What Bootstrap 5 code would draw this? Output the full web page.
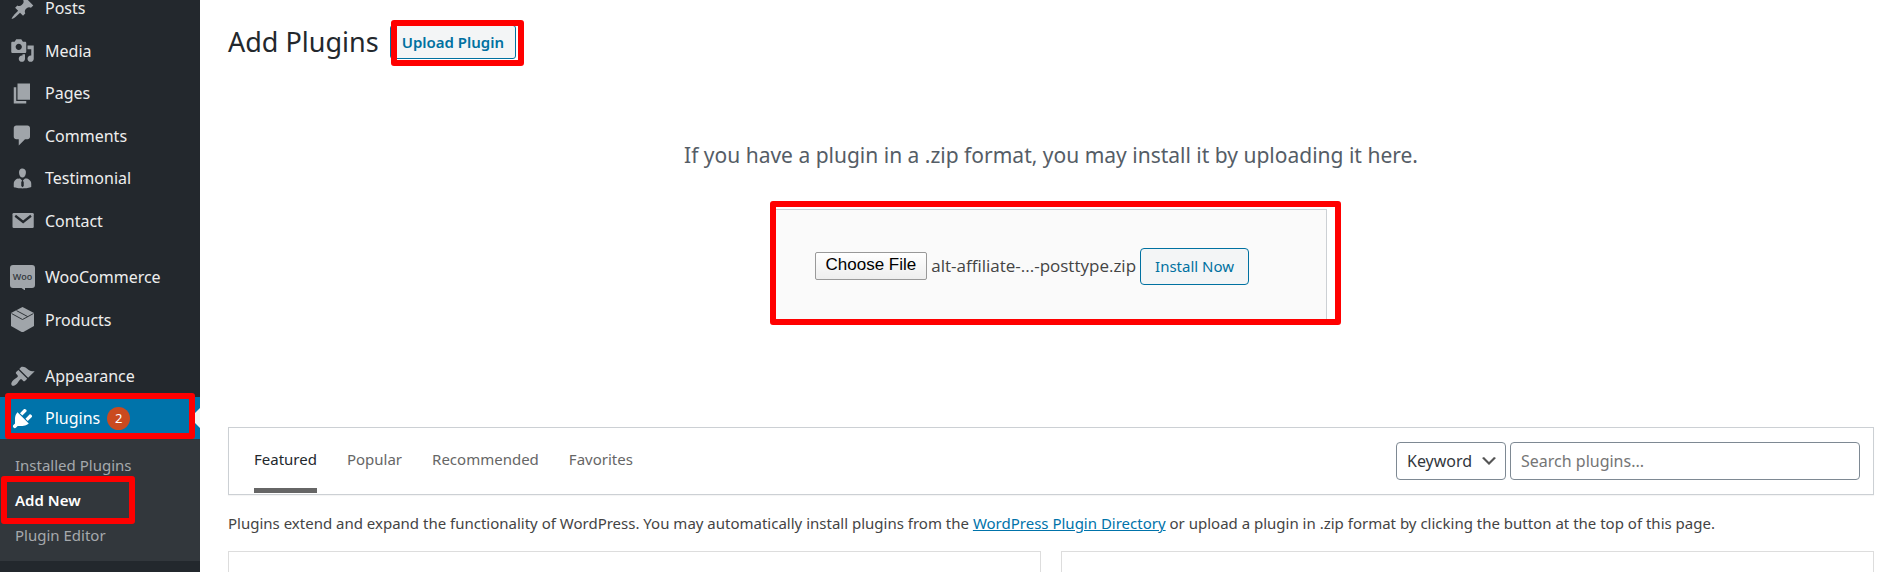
<!DOCTYPE html>
<html lang="en">
<head>
<meta charset="utf-8">
<meta name="viewport" content="width=device-width, initial-scale=1">
<title>Add Plugins</title>
<link rel="stylesheet" href="https://cdn.jsdelivr.net/npm/bootstrap@5.3.0/dist/css/bootstrap.min.css">
<style>
  body { font-family: "Noto Sans", "Open Sans", sans-serif; font-size: 15px; line-height: 24px; color: #444; background: #fff; }

  /* admin menu */
  .admin-menu { width: 200px; background: #23282d; }
  .menu-group { margin-bottom: 14px; }
  .menu-group.first { margin-top: -13px; }
  .menu-row { height: 42px; padding-left: 10px; gap: 10px; font-size: 16px; line-height: 16px; color: #eee; }
  li:nth-child(even) > .menu-row:not(.current) { height: 43px; }
  .menu-row svg { width: 25px; height: 25px; fill: #a0a5aa; flex: none; }
  .menu-row.current { background: #0073aa; color: #fff; }
  .menu-row.current svg { fill: #fff; }
  .menu-row.current::before { content: ""; position: absolute; right: 0; top: 11px; border: 10px solid transparent; border-left: 0; border-right-color: #f1f1f1; }
  .update-count { width: 23px; height: 23px; margin-left: -3px; background: #ca4a1f; color: #fff; font-size: 13px; line-height: 23px; }
  .submenu { background: #32373c; padding: 8px 0 9px; font-size: 15px; }
  .submenu a { height: 35px; padding-left: 15px; color: #a5a9ad; }
  .submenu a.active { color: #fff; font-weight: 600; }

  /* red highlight frames */
  .frame { position: absolute; border: 6px solid #f00; border-radius: 3px; pointer-events: none; }
  .frame-menu { inset: -4px 5px 0 5px; }
  .frame-sub { inset: -6px 65px -7px 1px; }
  .frame-upload { inset: -5px -8px -7px 1px; }
  .frame-form { inset: -9px -15px -5px -3px; }

  /* main column */
  .content { padding: 24px 22px 0 28px; }
  .content h1 { font-size: 27px; line-height: 36px; color: #23282d; }
  .page-head { gap: 11px; }
  .wp-btn { border: 1px solid #0071a1; border-radius: 4px; background: #f3f5f6; color: #0071a1; font-size: 15px; line-height: 24px; }
  .btn-upload { height: 34px; padding: 0 11px; border-radius: 3px; font-weight: 600; }
  .btn-install { height: 37px; padding: 0 14px; }
  .help { margin-top: 78px; font-size: 21px; line-height: 34px; color: #555d66; }
  .upload-form { width: 555px; height: 112px; margin-top: 37px; margin-bottom: 106px; padding: 2px 42px 0; border: 1px solid #ccd0d4; background: #fafafa; }
  .choose-file { height: 28px; padding: 0 10px; border: 1px solid #999; border-radius: 2px; background: linear-gradient(#fff, #eee); color: #000; font: 17px/24px "Liberation Sans", sans-serif; cursor: pointer; }
  .file-name { font-family: "Open Sans", sans-serif; font-size: 17px; }

  .filter-bar { height: 68px; padding: 0 13px 0 25px; border: 1px solid #ccd0d4; box-shadow: 0 1px 1px rgba(0,0,0,.04); }
  .filter-tabs { gap: 30px; }
  .filter-tabs a { color: #666; height: 66px; line-height: 62px; }
  .filter-tabs a.active { color: #23282d; box-shadow: inset 0 -1px #fff, inset 0 -6px #666; }
  .wp-field { height: 38px; border: 1px solid #7e8993; border-radius: 4px; font-size: 16px; color: #32373c; background-color: #fff; }
  select.wp-field { width: 110px; padding: 0 10px; appearance: none;
    background: #fff url("data:image/svg+xml,%3Csvg xmlns='http://www.w3.org/2000/svg' viewBox='0 0 20 20'%3E%3Cpath d='M5 6l5 5 5-5 2 1-7 7-7-7 2-1z' fill='%23555'/%3E%3C/svg%3E") no-repeat right 6px center / 20px; }
  input.wp-field { width: 350px; padding: 0 10px; }
  input.wp-field::placeholder { color: #757575; opacity: 1; }
  .intro { margin: 16px 0; }
  .intro a { color: #0073aa; }
  .plugin-list { gap: 20px; }
  .plugin-panel { border: 1px solid #ddd; border-bottom: 0; }
</style>
</head>
<body>
<div class="d-flex min-vh-100">
  <nav class="admin-menu flex-shrink-0 overflow-hidden" aria-label="Admin menu">
    <ul class="menu-group first list-unstyled">
      <li><a class="menu-row d-flex align-items-center text-decoration-none" href="#"><svg viewBox="0 0 20 20"><path d="M10.44 3.02l1.82-1.82 6.36 6.35-1.83 1.82c-1.05-.68-2.48-.57-3.41.36l-.75.75c-.92.93-1.04 2.35-.35 3.41l-1.83 1.82-2.41-2.41-2.8 2.79c-.42.42-3.38 2.71-3.8 2.29s1.86-3.39 2.28-3.81l2.79-2.79L4.1 9.36l1.83-1.82c1.05.69 2.48.57 3.4-.36l.75-.75c.93-.92 1.05-2.35.36-3.41z"/></svg>Posts</a></li>
      <li><a class="menu-row d-flex align-items-center text-decoration-none" href="#"><svg viewBox="0 0 20 20"><path d="M13 11V4c0-.55-.45-1-1-1h-1.67L9 1H5L3.67 3H2c-.55 0-1 .45-1 1v7c0 .55.45 1 1 1h10c.55 0 1-.45 1-1zM7 4.500c1.380 0 2.500 1.120 2.500 2.500S8.380 9.500 7 9.500 4.500 8.380 4.500 7 5.620 4.500 7 4.500zM14 6h5v10.500c0 1.380-1.120 2.500-2.500 2.500S14 17.880 14 16.500s1.120-2.500 2.500-2.500c.17 0 .34.02.5.05V9h-3V6zm-4 8.050V13h2v3.500c0 1.380-1.120 2.500-2.500 2.500S7 17.880 7 16.500 8.120 14 9.500 14c.17 0 .34.02.5.05z"/></svg>Media</a></li>
      <li><a class="menu-row d-flex align-items-center text-decoration-none" href="#"><svg viewBox="0 0 20 20"><path d="M6 15V2h10v13H6zm-1 1h8v2H3V5h2v11z"/></svg>Pages</a></li>
      <li><a class="menu-row d-flex align-items-center text-decoration-none" href="#"><svg viewBox="0 0 20 20"><path d="M5 2h9c1.100 0 2 .9 2 2v7c0 1.100-.9 2-2 2h-2l-5 5v-5H5c-1.100 0-2-.9-2-2V4c0-1.100.9-2 2-2z"/></svg>Comments</a></li>
      <li><a class="menu-row d-flex align-items-center text-decoration-none" href="#"><svg viewBox="0 0 20 20"><path d="M7.3 6l-.03-.19c-.04-.37-.05-.73-.03-1.08.02-.36.1-.71.25-1.04.14-.32.31-.61.52-.86s.49-.46.83-.6c.34-.15.72-.23 1.13-.23.69 0 1.26.2 1.71.59s.76.87.91 1.44.18 1.16.09 1.78l-.03.19c-.01.09-.05.25-.11.48-.05.24-.12.47-.2.69-.08.21-.19.45-.34.72-.14.27-.3.49-.47.69-.18.19-.4.34-.67.48-.27.13-.55.19-.86.19s-.59-.06-.87-.19c-.26-.13-.49-.29-.67-.5-.18-.2-.34-.42-.49-.66-.15-.25-.26-.49-.34-.73-.09-.25-.16-.47-.21-.67-.06-.21-.1-.37-.12-.5zm9.2 6.24c.41.7.5 1.41.5 2.14v2.49c0 .03-.12.08-.29.13-.18.04-.42.13-.97.27-.55.12-1.1.24-1.65.34s-1.19.19-1.95.27c-.75.08-1.46.12-2.13.12-.68 0-1.39-.04-2.14-.12-.75-.07-1.4-.17-1.98-.27-.58-.11-1.08-.23-1.56-.34-.49-.11-.8-.21-1.06-.29L3 16.87v-2.49c0-.75.07-1.46.46-2.15s.81-1.25 1.5-1.68C5.66 10.12 7.19 10 8 10l1.67 1.67L9 13v3l1.02 1.08L11 16v-3l-.68-1.33L11.97 10c.77 0 2.2.07 2.9.52.71.45 1.21 1.02 1.63 1.72z"/></svg>Testimonial</a></li>
      <li><a class="menu-row d-flex align-items-center text-decoration-none" href="#"><svg viewBox="0 0 20 20"><path d="M3 4h15q1 0 1 1v10q0 1-1 1H3q-1 0-1-1V5q0-1 1-1z"/><path d="M4.200 6.200l6.300 5 6.300-5" fill="none" stroke="#23282d" stroke-width="1.800"/></svg>Contact</a></li>
    </ul>
    <ul class="menu-group list-unstyled">
      <li><a class="menu-row d-flex align-items-center text-decoration-none" href="#"><svg viewBox="0 0 25 25"><path d="M3 0h19q3 0 3 3v17q0 3-3 3h-7v2.500l-3.500-2.500H3q-3 0-3-3V3q0-3 3-3z"/><text x="12.500" y="14.500" text-anchor="middle" font-family="Open Sans, sans-serif" font-size="9" font-weight="600" fill="#33383d">Woo</text></svg>WooCommerce</a></li>
      <li><a class="menu-row d-flex align-items-center text-decoration-none" href="#"><svg viewBox="0 0 25 25"><path d="M12.500 0L24 6v13l-11.500 6.500L1 19V6z"/><path d="M1.500 6.500l11 6 11-6M6.500 3.600l11.200 6" fill="none" stroke="#23282d" stroke-width=".9"/></svg>Products</a></li>
    </ul>
    <ul class="menu-group list-unstyled mb-0">
      <li><a class="menu-row d-flex align-items-center text-decoration-none" href="#"><svg viewBox="0 0 20 20"><path d="M14.480 11.060L7.410 3.990l1.500-1.500c.5-.56 2.300-.47 3.510.32 1.210.8 1.430 1.280 2.910 2.100 1.180.64 2.450 1.260 4.450.85zm-.71.71L6.700 4.700 4.930 6.470c-.39.39-.39 1.020 0 1.410l1.060 1.060c.39.39.39 1.030 0 1.420-.6.6-1.430 1.110-2.210 1.690-.35.26-.7.53-1.010.84C1.430 14.230.4 16.080 1.400 17.070c.99 1 2.840-.03 4.180-1.360.31-.31.58-.66.85-1.020.57-.78 1.080-1.610 1.690-2.210.39-.39 1.020-.39 1.410 0l1.060 1.060c.39.39 1.020.39 1.410 0z"/></svg>Appearance</a></li>
      <li>
        <a class="menu-row current position-relative d-flex align-items-center text-decoration-none" href="#"><svg viewBox="0 0 20 20"><path d="M13.110 4.360L9.870 7.600 8 5.730l3.240-3.240c.35-.34 1.050-.2 1.560.32.52.51.66 1.210.31 1.550zm-8 1.770l.91-1.120 9.010 9.010-1.190.84c-.71.71-2.630 1.160-3.820 1.160H6.140L4.900 17.260c-.59.59-1.540.59-2.120 0-.59-.58-.59-1.530 0-2.120l1.240-1.240v-3.880c0-1.130.4-3.190 1.090-3.890zm7.260 3.970l3.240-3.240c.34-.35 1.040-.21 1.550.31.52.51.66 1.210.31 1.550l-3.240 3.250z"/></svg>Plugins<span class="update-count rounded-circle text-center">2</span><span class="frame frame-menu"></span></a>
        <div class="submenu">
          <a class="d-flex align-items-center text-decoration-none" href="#">Installed Plugins</a>
          <a class="active position-relative d-flex align-items-center text-decoration-none" href="#">Add New<span class="frame frame-sub"></span></a>
          <a class="d-flex align-items-center text-decoration-none" href="#">Plugin Editor</a>
        </div>
      </li>
    </ul>
  </nav>

  <main class="content flex-grow-1 d-flex flex-column">
    <header class="page-head d-flex align-items-center">
      <h1 class="fw-normal mb-0">Add Plugins</h1>
      <div class="position-relative d-flex"><button type="button" class="wp-btn btn-upload">Upload Plugin</button><span class="frame frame-upload"></span></div>
    </header>

    <p class="help text-center mb-0">If you have a plugin in a .zip format, you may install it by uploading it here.</p>
    <form class="upload-form position-relative d-flex align-items-center align-self-center gap-1 me-1">
      <input type="file" id="pluginzip" class="visually-hidden">
      <label for="pluginzip" class="choose-file text-nowrap">Choose File</label>
      <span class="file-name text-nowrap">alt-affiliate-...-posttype.zip</span>
      <button type="button" class="wp-btn btn-install text-nowrap">Install Now</button>
      <span class="frame frame-form"></span>
    </form>

    <div class="filter-bar d-flex align-items-center justify-content-between">
      <nav class="filter-tabs d-flex" aria-label="Plugin filters">
        <a class="active text-decoration-none" href="#">Featured</a>
        <a class="text-decoration-none" href="#">Popular</a>
        <a class="text-decoration-none" href="#">Recommended</a>
        <a class="text-decoration-none" href="#">Favorites</a>
      </nav>
      <form class="d-flex gap-1">
        <select class="wp-field" aria-label="Search by"><option>Keyword</option><option>Author</option><option>Tag</option></select>
        <input type="search" class="wp-field" placeholder="Search plugins..." aria-label="Search plugins">
      </form>
    </div>
    <p class="intro">Plugins extend and expand the functionality of WordPress. You may automatically install plugins from the <a href="#">WordPress Plugin Directory</a> or upload a plugin in .zip format by clicking the button at the top of this page.</p>
    <div class="plugin-list d-flex flex-grow-1">
      <div class="plugin-panel flex-fill"></div>
      <div class="plugin-panel flex-fill"></div>
    </div>
  </main>
</div>
<script src="https://cdn.jsdelivr.net/npm/bootstrap@5.3.0/dist/js/bootstrap.bundle.min.js"></script>
</body>
</html>
